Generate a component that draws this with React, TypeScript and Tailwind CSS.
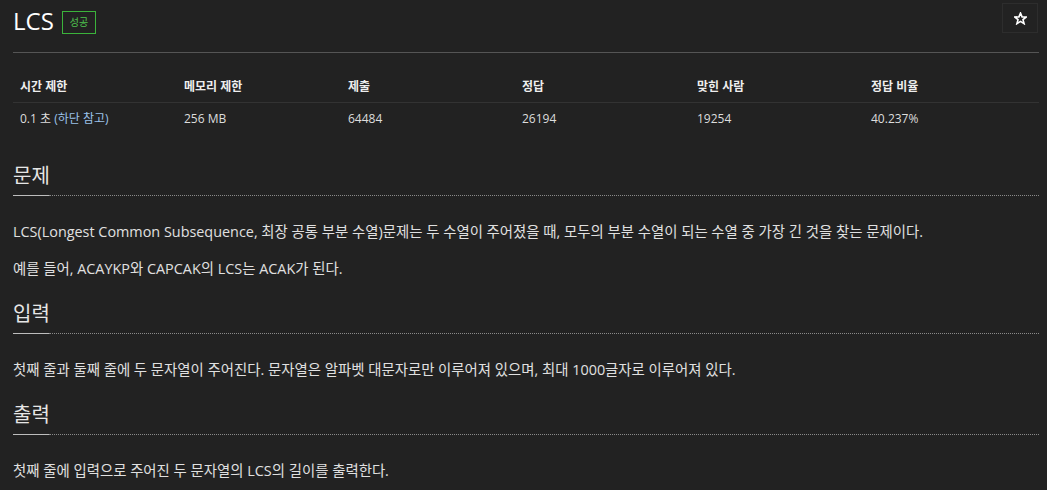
const stats = [
  { label: '시간 제한', value: 'time' },
  { label: '메모리 제한', value: '256 MB' },
  { label: '제출', value: '64484' },
  { label: '정답', value: '26194' },
  { label: '맞힌 사람', value: '19254' },
  { label: '정답 비율', value: '40.237%' },
];

const font = "font-['Open_Sans','Noto_Sans_CJK_KR',sans-serif]";

function Section({ title, children }: { title: string; children: React.ReactNode }) {
  return (
    <section>
      <h2 className="text-[20px] leading-[30px] font-normal text-[#e6e6e6]">{title}</h2>
      <div className="mt-[4px] flex items-end">
        <div className="w-[36px] border-b border-[#bdbdbd]" />
        <div className="flex-1 border-b border-dotted border-[#8a8a8a]" />
      </div>
      <div className="pt-[25px] flex flex-col gap-[15px] text-[14.4px] leading-[22px] text-[#e0e0e0]">
        {children}
      </div>
    </section>
  );
}

export default function App() {
  return (
    <div className={`min-h-screen bg-[#222222] pl-[13px] pr-[8px] pb-6 ${font}`}>
      <div className="pt-[3px] flex items-start justify-between">
        <div className="flex items-center gap-[8px] pt-[4px]">
          <h1 className="text-[24px] leading-[28px] font-normal text-white">LCS</h1>
          <span className="mt-[3px] border border-[#3bb33b] px-[7px] text-[10px] leading-[21px] text-[#4ec24e]">성공</span>
        </div>
        <button className="mr-[1px] flex h-[30px] w-[36px] items-center justify-center border border-[#2d2d2d] text-white">
          <svg width="13" height="13" viewBox="0 0 24 24" fill="none" stroke="currentColor" strokeWidth="3" strokeLinejoin="miter">
            <polygon points="12,2 14.9,9 22.5,9.3 16.6,14.1 18.6,21.5 12,17.3 5.4,21.5 7.4,14.1 1.5,9.3 9.1,9" />
          </svg>
        </button>
      </div>

      <div className="mt-[17px] border-t border-[#555555]" />

      <div className="mt-[18px] grid grid-cols-[164px_164px_174px_175px_174px_1fr] text-[12px]">
        {stats.map(s => (
          <div key={s.label} className="h-[32px] px-[7px] flex items-center border-b border-[#333333] font-bold text-[#eeeeee]">
            {s.label}
          </div>
        ))}
        {stats.map(s => (
          <div key={s.label + 'v'} className="h-[32px] px-[7px] flex items-center text-[#dddddd]">
            {s.value === 'time' ? (
              <span>0.1 초 <span className="text-[#9cc3ea]">(하단 참고)</span></span>
            ) : s.value}
          </div>
        ))}
      </div>

      <div className="pt-[26px] flex flex-col gap-[19px]">
        <Section title="문제">
          <p>LCS(Longest Common Subsequence, 최장 공통 부분 수열)문제는 두 수열이 주어졌을 때, 모두의 부분 수열이 되는 수열 중 가장 긴 것을 찾는 문제이다.</p>
          <p>예를 들어, ACAYKP와 CAPCAK의 LCS는 ACAK가 된다.</p>
        </Section>
        <Section title="입력">
          <p>첫째 줄과 둘째 줄에 두 문자열이 주어진다. 문자열은 알파벳 대문자로만 이루어져 있으며, 최대 1000글자로 이루어져 있다.</p>
        </Section>
        <Section title="출력">
          <p>첫째 줄에 입력으로 주어진 두 문자열의 LCS의 길이를 출력한다.</p>
        </Section>
      </div>
    </div>
  );
}
